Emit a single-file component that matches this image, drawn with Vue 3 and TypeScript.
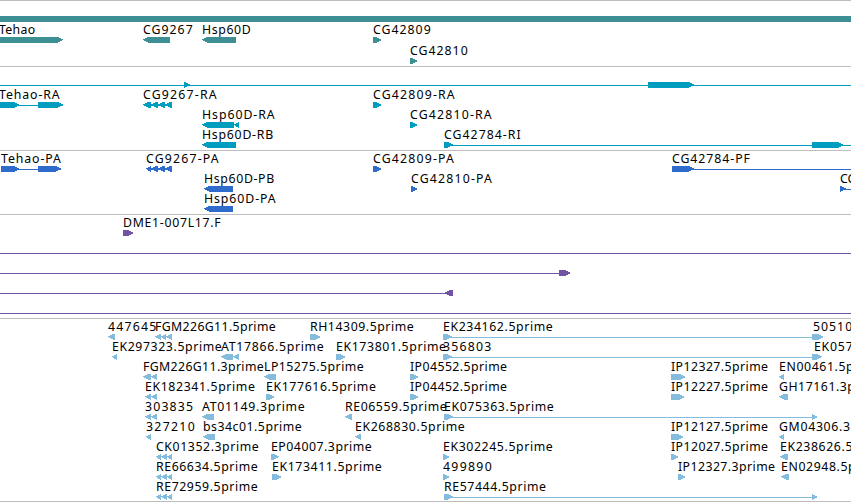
<script setup lang="ts">
type Dir = 'l' | 'r'
type Block = [from: number, to: number, dir?: Dir]

interface Feature {
  row: number
  x: number
  label?: string
  // right edge of the label, used to fit the text
  end?: number
  blocks?: Block[]
  line?: [number, number]
}

interface Track {
  name: string
  height: number
  pitch: number
  features: Feature[]
}

const WIDTH = 851

const l = (...edges: number[]): Block[] =>
  edges.slice(1).map((to, i) => [edges[i], to, 'l'] as Block)
const r = (from: number, to: number): Block[] => [[from, to, 'r']]

const tracks: Track[] = [
  {
    name: 'gene',
    height: 66,
    pitch: 21,
    features: [
      { row: 0, x: 0, blocks: [[0, WIDTH]] },
      { row: 1, x: -1, label: 'Tehao', end: 34.5, blocks: r(-1, 63) },
      { row: 1, x: 143, label: 'CG9267', end: 192, blocks: l(143, 170) },
      { row: 1, x: 202, label: 'Hsp60D', end: 250, blocks: l(202, 236) },
      { row: 1, x: 373, label: 'CG42809', end: 430, blocks: r(373, 381.5) },
      { row: 2, x: 410, label: 'CG42810', end: 467, blocks: r(410, 417.5) },
    ],
  },
  {
    name: 'transcript',
    height: 84,
    pitch: 20,
    features: [
      { row: 0, x: 0, line: [0, WIDTH], blocks: [...r(184, 190), ...r(648, 694)] },
      { row: 1, x: -1, label: 'Tehao-RA', end: 59, line: [0, 63], blocks: [...r(-1, 19.5), ...r(38, 63)] },
      { row: 1, x: 143, label: 'CG9267-RA', end: 216, line: [144, 172], blocks: l(143, 151, 158, 165, 172) },
      { row: 1, x: 373, label: 'CG42809-RA', end: 454, blocks: r(373, 381.5) },
      { row: 2, x: 202, label: 'Hsp60D-RA', end: 274, blocks: l(202, 234, 239) },
      { row: 2, x: 410, label: 'CG42810-RA', end: 491, blocks: r(410, 417.5) },
      { row: 3, x: 202, label: 'Hsp60D-RB', end: 272.5, blocks: l(202, 236) },
      { row: 3, x: 444, label: 'CG42784-RI', end: 520, line: [444, WIDTH], blocks: [...r(444, 453), ...r(812, 843.5)] },
    ],
  },
  {
    name: 'protein',
    height: 64,
    pitch: 20,
    features: [
      { row: 0, x: 1, label: 'Tehao-PA', end: 60.2, line: [1, 61], blocks: [...r(1, 19.5), ...r(38, 61)] },
      { row: 0, x: 146, label: 'CG9267-PA', end: 218, line: [147, 172], blocks: l(146, 151, 158, 165, 172) },
      { row: 0, x: 373, label: 'CG42809-PA', end: 453.2, blocks: r(373, 381.5) },
      { row: 0, x: 672, label: 'CG42784-PF', end: 749.2, line: [672, WIDTH], blocks: r(672, 694) },
      { row: 1, x: 204, label: 'Hsp60D-PB', end: 273.5, blocks: l(204, 233) },
      { row: 1, x: 411, label: 'CG42810-PA', end: 491.2, blocks: r(411, 417.5) },
      { row: 1, x: 840, label: 'CG', line: [840, WIDTH], blocks: r(840, 846) },
      { row: 2, x: 204, label: 'Hsp60D-PA', end: 275, blocks: l(204, 233) },
    ],
  },
  {
    name: 'clone',
    height: 104,
    pitch: 20,
    features: [
      { row: 0, x: 123, label: 'DME1-007L17.F', end: 220, blocks: r(123, 133.5) },
      { row: 1, x: 0, line: [0, WIDTH] },
      { row: 2, x: 0, line: [0, 560], blocks: r(559, 570.5) },
      { row: 3, x: 0, line: [0, 446], blocks: l(444.5, 453) },
      { row: 4, x: 0, line: [0, WIDTH] },
    ],
  },
  {
    name: 'est',
    height: 183,
    pitch: 20,
    features: [
      { row: 0, x: 108, label: '447645', end: 155.5, blocks: l(108, 115) },
      { row: 0, x: 155, label: 'FGM226G11.5prime', end: 275, blocks: l(155, 161, 166, 172) },
      { row: 0, x: 310, label: 'RH14309.5prime', end: 413, blocks: r(310, 320.5) },
      { row: 0, x: 443, label: 'EK234162.5prime', end: 552, line: [443, 813], blocks: [...r(443, 452), ...r(812, 823.5)] },
      { row: 0, x: 813, label: '50510', end: 851.5 },
      { row: 1, x: 112, label: 'EK297323.5prime', end: 221, blocks: l(112, 117) },
      { row: 1, x: 221, label: 'AT17866.5prime', end: 323, blocks: l(221, 233, 239) },
      { row: 1, x: 336, label: 'EK173801.5prime', end: 445.3, blocks: r(336, 345.5) },
      { row: 1, x: 443, label: '356803', end: 490.5, line: [443, 813], blocks: [...r(443, 452), ...r(812, 822)] },
      { row: 1, x: 814, label: 'EK057', end: 852 },
      { row: 2, x: 143, label: 'FGM226G11.3prime', end: 263, blocks: l(143, 151, 157) },
      { row: 2, x: 264, label: 'LP15275.5prime', end: 363, blocks: l(264, 276) },
      { row: 2, x: 410, label: 'IP04552.5prime', end: 506.3, blocks: r(410, 418.5) },
      { row: 2, x: 671, label: 'IP12327.5prime', end: 767.3, blocks: r(671, 685.5) },
      { row: 2, x: 779, label: 'EN00461.5prime', end: 882, blocks: l(779, 784) },
      { row: 3, x: 145, label: 'EK182341.5prime', end: 254.2, blocks: l(145, 151, 157) },
      { row: 3, x: 266, label: 'EK177616.5prime', end: 375.2, blocks: r(266, 274.5) },
      { row: 3, x: 410, label: 'IP04452.5prime', end: 506.3, blocks: r(410, 418.5) },
      { row: 3, x: 671, label: 'IP12227.5prime', end: 767.3, blocks: r(671, 684.5) },
      { row: 3, x: 779, label: 'GH17161.3prime', end: 883, blocks: l(779, 788) },
      { row: 4, x: 145, label: '303835', end: 192.3, blocks: l(145, 151, 157) },
      { row: 4, x: 202, label: 'AT01149.3prime', end: 304, blocks: l(202, 214) },
      { row: 4, x: 345, label: 'RE06559.5prime', end: 446, blocks: l(345, 352) },
      { row: 4, x: 444, label: 'EK075363.5prime', end: 553, line: [444, 813], blocks: [...r(444, 453), ...r(812, 817.5)] },
      { row: 5, x: 146, label: '327210', end: 194, blocks: l(146, 151) },
      { row: 5, x: 203, label: 'bs34c01.5prime', end: 301, blocks: l(203, 215) },
      { row: 5, x: 355, label: 'EK268830.5prime', end: 464, blocks: l(355, 361) },
      { row: 5, x: 671, label: 'IP12127.5prime', end: 767.3, blocks: r(671, 683.5) },
      { row: 5, x: 779, label: 'GM04306.3prime', end: 887, blocks: l(779, 784) },
      { row: 6, x: 156, label: 'CK01352.3prime', end: 258, blocks: l(156, 161, 167, 172) },
      { row: 6, x: 271, label: 'EP04007.3prime', end: 371, blocks: r(271, 279) },
      { row: 6, x: 443, label: 'EK302245.5prime', end: 552, blocks: r(443, 449.5) },
      { row: 6, x: 671, label: 'IP12027.5prime', end: 767.3, blocks: r(671, 678.5) },
      { row: 6, x: 780, label: 'EK238626.5prime', end: 889, blocks: l(780, 788) },
      { row: 7, x: 156, label: 'RE66634.5prime', end: 257, blocks: l(156, 161, 167, 172) },
      { row: 7, x: 272, label: 'EK173411.5prime', end: 381, blocks: r(272, 281.5) },
      { row: 7, x: 443, label: '499890', end: 491, blocks: r(443, 449.5) },
      { row: 7, x: 678, label: 'IP12327.3prime', end: 774.3, blocks: r(678, 685.5) },
      { row: 7, x: 781, label: 'EN02948.5prime', end: 884, blocks: l(781, 789) },
      { row: 8, x: 156, label: 'RE72959.5prime', end: 257, blocks: l(156, 161, 167, 172) },
      { row: 8, x: 444, label: 'RE57444.5prime', end: 545.3, line: [444, 813], blocks: [...r(444, 453), ...r(812, 817.5)] },
    ],
  },
]

// A block is 6px tall and tapers over its last pixels in the strand direction
function blockPoints([from, to, dir]: Block): string {
  const head = Math.min(5.5, to - from)
  if (dir === 'r') {
    return `${from},0 ${to - head},0 ${to},2.6 ${to},3.2 ${to - head},6 ${from},6`
  }
  if (dir === 'l') {
    return `${to},0 ${from + head},0 ${from},2.6 ${from},3.2 ${from + head},6 ${to},6`
  }
  return `${from},0 ${to},0 ${to},6 ${from},6`
}
</script>

<template>
  <main class="browser">
    <section v-for="track in tracks" :key="track.name" class="track" :class="track.name">
      <svg :width="WIDTH" :height="track.height - 1">
        <g
          v-for="(feature, i) in track.features"
          :key="i"
          :transform="`translate(0 ${15 + feature.row * track.pitch})`"
        >
          <rect
            v-if="feature.line"
            :x="feature.line[0]"
            y="3"
            :width="feature.line[1] - feature.line[0]"
            height="1"
          />
          <polygon
            v-for="(block, j) in feature.blocks"
            :key="j"
            :points="blockPoints(block)"
          />
          <text
            v-if="feature.label"
            :x="feature.x"
            y="-3"
            :textLength="feature.end ? feature.end - feature.x + 0.7 : undefined"
          >{{ feature.label }}</text>
        </g>
      </svg>
    </section>
  </main>
</template>

<style>
body {
  margin: 0;
  background: #fff;
}
</style>

<style scoped>
.browser {
  width: 851px;
  height: 502px;
  box-sizing: border-box;
  overflow: hidden;
  border-bottom: 1px solid #bebebe;
}

.track {
  border-top: 1px solid #bebebe;
}

.track svg {
  display: block;
  overflow: hidden;
}

.track polygon {
  shape-rendering: crispEdges;
}

.track text {
  font-family: "Noto Sans", "DejaVu Sans", sans-serif;
  font-size: 12.3px;
  fill: #000;
}

.gene {
  fill: #3d8f94;
}

.transcript {
  fill: #009dbf;
}

.protein {
  fill: #2f6bcb;
}

.clone {
  fill: #7254a5;
}

.est {
  fill: #85bcde;
}
</style>
